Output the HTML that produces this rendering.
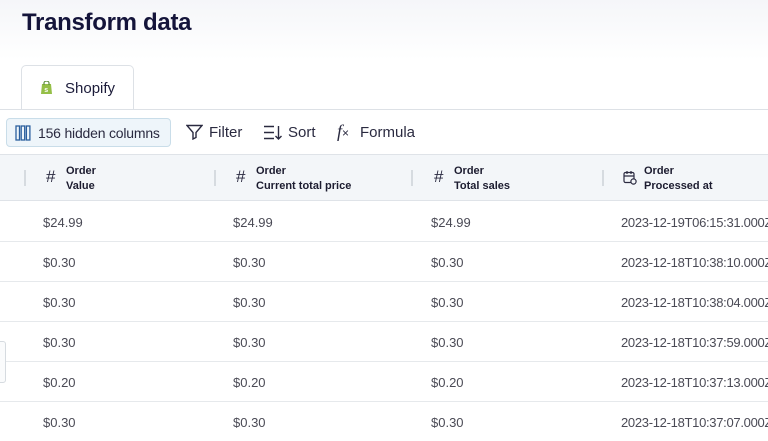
<!DOCTYPE html>
<html><head><style>
*{margin:0;padding:0;box-sizing:border-box}
body{width:768px;height:441px;overflow:hidden;position:relative;font-family:"Liberation Sans",sans-serif;background:#fff;white-space:nowrap}
.bgtop{position:absolute;left:0;top:0;width:768px;height:60px;background:linear-gradient(#f5f6f9,#fff)}
h1{position:absolute;left:22px;top:9px;font-size:24px;font-weight:bold;color:#14143a;letter-spacing:-0.3px}
.tab{position:absolute;left:21px;top:65px;width:113px;height:45px;border:1px solid #dde1e6;border-bottom:none;border-radius:5px 5px 0 0;background:#fff}
.tab span{position:absolute;left:43px;top:14px;font-size:15px;color:#1c1c3a}
.hline{position:absolute;left:0;top:109px;width:768px;height:1px;background:#dde1e6}
.btn{position:absolute;left:6px;top:118px;width:165px;height:29px;border:1px solid #c9dde9;background:#eef5fa;border-radius:4px}
.tool{position:absolute;top:124px;font-size:15px;color:#2a2a40}
.head{position:absolute;left:0;top:154px;width:768px;height:47px;background:#f3f6f9;border-top:1px solid #dfe3e8;border-bottom:1px solid #dfe3e8}
.sep{position:absolute;top:170px;width:2px;height:16px;background:#d6dbe0}
.hash{position:absolute;top:167px;font-size:17px;color:#2a2a40}
.ht{position:absolute;top:164px;font-size:11px;font-weight:bold;color:#1c1c30;line-height:15px}
.row{position:absolute;left:0;width:768px;height:1px;background:#e6e9ec}
.c{position:absolute;font-size:13px;color:#4a4a55}
.d{letter-spacing:-0.3px}
</style></head><body>
<div class="bgtop"></div>
<h1>Transform data</h1>
<div class="tab"><svg style="position:absolute;left:19px;top:15px" width="11" height="13" viewBox="0 0 11 13"><path d="M1 3h9l1 10H0z" fill="#95bf47"/><path d="M3 4V2a2.5 2 0 015 0v2" fill="none" stroke="#5e8e3e" stroke-width="1.2"/><text x="3.3" y="11" font-size="7" fill="#fff" font-family="Liberation Sans" font-weight="bold">s</text></svg><span>Shopify</span></div>
<div class="hline"></div>
<div class="btn"><svg style="position:absolute;left:8px;top:6px" width="16" height="16" viewBox="0 0 16 16" fill="none" stroke="#2b5f9e" stroke-width="1.3"><rect x="1" y="1" width="3.5" height="14"/><rect x="6.2" y="1" width="3.5" height="14"/><rect x="11.4" y="1" width="3.5" height="14"/></svg><span style="position:absolute;left:31px;top:6px;font-size:14px;letter-spacing:-0.2px;color:#2a2a40">156 hidden columns</span></div>
<svg style="position:absolute;left:186px;top:124px" width="17" height="16" viewBox="0 0 17 16" fill="none" stroke="#2a2a40" stroke-width="1.4"><path d="M1 1.5h15l-6 7v5l-3 1.5v-6.5z"/></svg>
<div class="tool" style="left:209px">Filter</div>
<svg style="position:absolute;left:263px;top:125px" width="20" height="15" viewBox="0 0 20 15" fill="none" stroke="#2a2a40" stroke-width="1.4"><path d="M1 1.5h10M1 7.5h10M1 13.5h10M15.5 1v13M12.5 11l3 3 3-3"/></svg>
<div class="tool" style="left:288px">Sort</div>
<div style="position:absolute;left:337px;top:121px;font-size:18px;font-style:italic;color:#2a2a40;font-family:'Liberation Serif',serif">f<span style="font-size:12px;font-style:normal;font-family:'Liberation Sans'">×</span></div>
<div class="tool" style="left:360px">Formula</div>
<div class="head"></div>
<div class="sep" style="left:24px"></div><div class="sep" style="left:214px"></div><div class="sep" style="left:411px"></div><div class="sep" style="left:602px"></div>
<div class="hash" style="left:46px">#</div><div class="hash" style="left:236px">#</div><div class="hash" style="left:434px">#</div>
<svg style="position:absolute;left:623px;top:170px" width="14" height="15" viewBox="0 0 14 15" fill="none" stroke="#2a2a40" stroke-width="1.2"><rect x="1" y="2.5" width="10" height="10" rx="1.5"/><path d="M1 6h10M4 1v3M8 1v3"/><circle cx="10.5" cy="11.5" r="2.6" fill="#f3f6f9"/></svg>
<div class="ht" style="left:66px">Order<br>Value</div>
<div class="ht" style="left:256px">Order<br>Current total price</div>
<div class="ht" style="left:454px">Order<br>Total sales</div>
<div class="ht" style="left:644px">Order<br>Processed at</div>
<div class="row" style="top:241px"></div><div class="row" style="top:281px"></div><div class="row" style="top:321px"></div><div class="row" style="top:361px"></div><div class="row" style="top:401px"></div>
<div style="position:absolute;left:-4px;top:341px;width:10px;height:42px;border:1px solid #d6dbe0;border-radius:3px;background:#fafbfc"></div>
<div class="c" style="left:43px;top:215px">$24.99</div><div class="c" style="left:233px;top:215px">$24.99</div><div class="c" style="left:431px;top:215px">$24.99</div><div class="c d" style="left:621px;top:215px">2023-12-19T06:15:31.000Z</div>
<div class="c" style="left:43px;top:255px">$0.30</div><div class="c" style="left:233px;top:255px">$0.30</div><div class="c" style="left:431px;top:255px">$0.30</div><div class="c d" style="left:621px;top:255px">2023-12-18T10:38:10.000Z</div>
<div class="c" style="left:43px;top:295px">$0.30</div><div class="c" style="left:233px;top:295px">$0.30</div><div class="c" style="left:431px;top:295px">$0.30</div><div class="c d" style="left:621px;top:295px">2023-12-18T10:38:04.000Z</div>
<div class="c" style="left:43px;top:335px">$0.30</div><div class="c" style="left:233px;top:335px">$0.30</div><div class="c" style="left:431px;top:335px">$0.30</div><div class="c d" style="left:621px;top:335px">2023-12-18T10:37:59.000Z</div>
<div class="c" style="left:43px;top:375px">$0.20</div><div class="c" style="left:233px;top:375px">$0.20</div><div class="c" style="left:431px;top:375px">$0.20</div><div class="c d" style="left:621px;top:375px">2023-12-18T10:37:13.000Z</div>
<div class="c" style="left:43px;top:415px">$0.30</div><div class="c" style="left:233px;top:415px">$0.30</div><div class="c" style="left:431px;top:415px">$0.30</div><div class="c d" style="left:621px;top:415px">2023-12-18T10:37:07.000Z</div>
</body></html>
